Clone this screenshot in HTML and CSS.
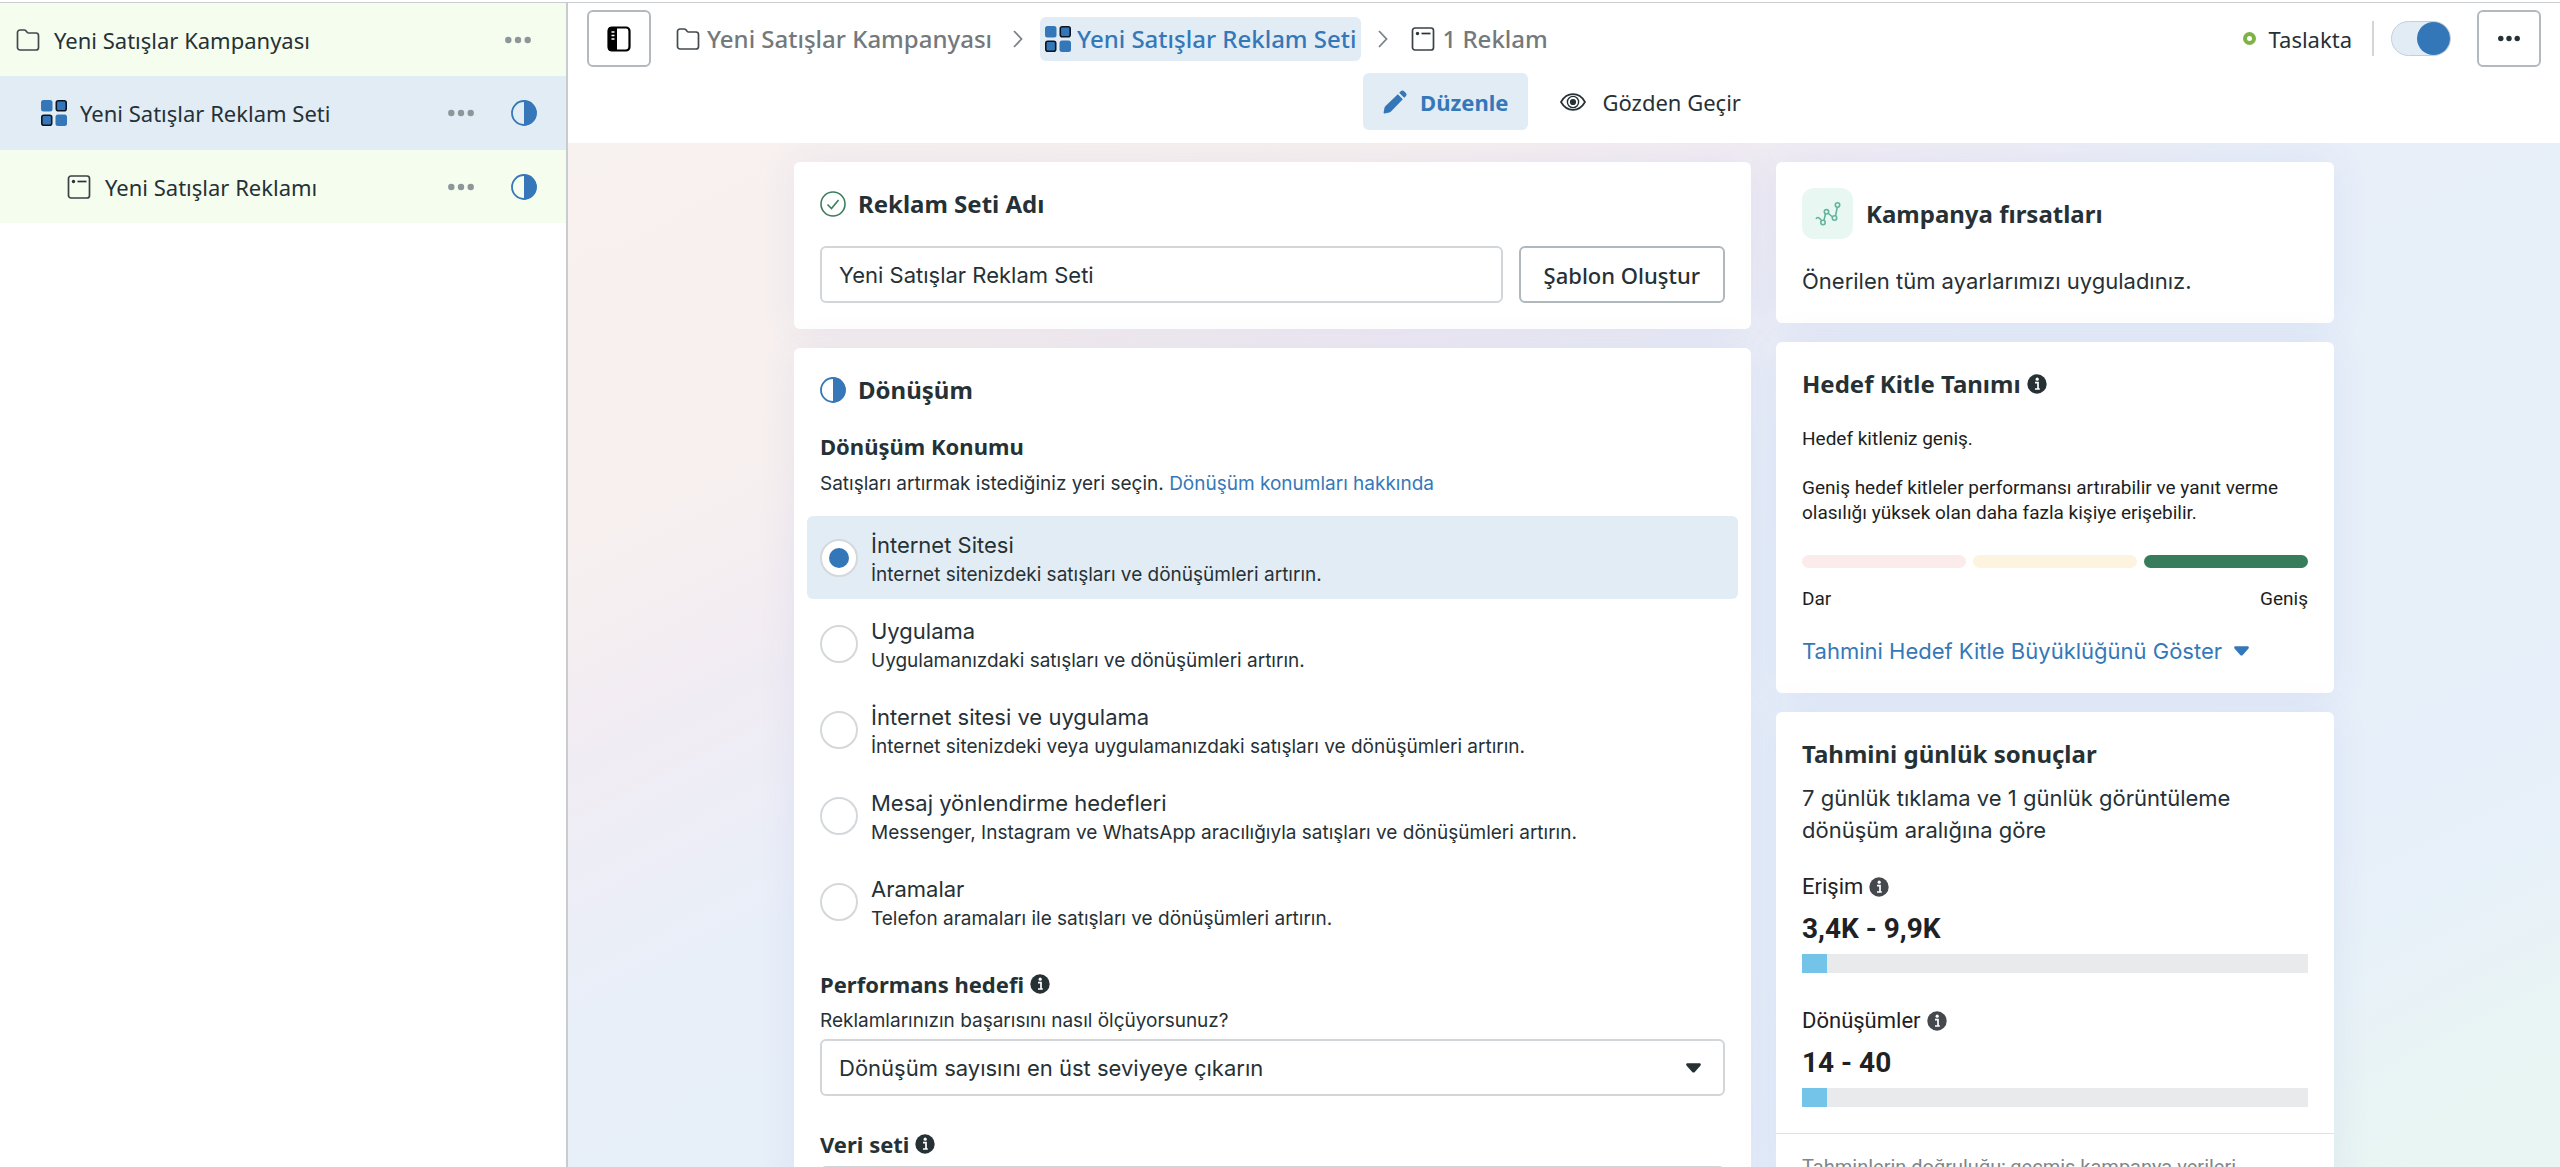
FILE: index.html
```html
<!DOCTYPE html>
<html lang="tr">
<head>
<meta charset="utf-8">
<title>Yeni Satışlar Reklam Seti</title>
<link rel="stylesheet" href="styles.css">
</head>
<body>
<svg class="sprite" aria-hidden="true">
  <symbol id="folder" viewBox="0 0 24 24"><path d="M1.5 19V4.5a2.5 2.5 0 0 1 2.500-2.500h4.200c.7 0 1.300.3 1.700.8l1.400 1.700c.3.300.6.5 1.100.5h7.600A2.500 2.500 0 0 1 22.500 7.500V19.500A2.500 2.500 0 0 1 20 22H4A2.500 2.500 0 0 1 1.500 19.500Z" fill="none" stroke="#414a4e" stroke-width="1.700"/></symbol>
  <symbol id="adset" viewBox="0 0 26 26"><g fill="#3377b8"><rect width="11.500" height="11.500" rx="2.500"/><rect x="14.500" y="14.500" width="11.500" height="11.500" rx="2.500"/></g><g fill="#3377b8" stroke="#0c1420" stroke-width="1.600"><rect x="15.300" y=".8" width="9.900" height="9.900" rx="2"/><rect x=".8" y="15.300" width="9.900" height="9.900" rx="2"/></g></symbol>
  <symbol id="ad" viewBox="0 0 24 24"><rect x="1.500" y="1" width="21" height="22" rx="2.500" fill="none" stroke="#3a4246" stroke-width="1.700"/><circle cx="6.500" cy="6.500" r="1.700" fill="#2b3337"/><path d="M10.500 6.500h9" stroke="#2b3337" stroke-width="1.700"/></symbol>
  <symbol id="dots" viewBox="0 0 26 8"><g fill="currentColor"><circle cx="3.300" cy="4" r="3.200"/><circle cx="13" cy="4" r="3.200"/><circle cx="22.700" cy="4" r="3.200"/></g></symbol>
  <symbol id="half" viewBox="0 0 26 26"><circle cx="13" cy="13" r="12" fill="none" stroke="#3577b8" stroke-width="1.800"/><path d="M13 .5a12.500 12.500 0 0 1 0 25Z" fill="#3577b8"/></symbol>
  <symbol id="chevron" viewBox="0 0 10 18"><path d="M1 1l7.500 8L1 17" fill="none" stroke="#7b8386" stroke-width="1.800"/></symbol>
  <symbol id="info" viewBox="0 0 20 20"><circle cx="10" cy="10" r="9.700" fill="currentColor"/><circle cx="10.200" cy="5.200" r="1.600" fill="#fff"/><path d="M8 8.700h3V15M8 15h4.800" fill="none" stroke="#fff" stroke-width="1.700"/></symbol>
  <symbol id="caret" viewBox="0 0 16 10"><path d="M2 0h12c1.800 0 2.400 1.300 1.300 2.500L9.400 9.200c-.8.900-2 .9-2.800 0L.7 2.500C-.4 1.300.2 0 2 0Z" fill="currentColor"/></symbol>
</svg>
<div class="app">
  <aside class="sidebar">
    <nav aria-label="Kampanya yapısı">
      <div class="node node-campaign">
        <svg class="icon"><use href="#folder"/></svg><a href="#">Yeni Satışlar Kampanyası</a>
        <button class="dots" aria-label="Diğer"><svg><use href="#dots"/></svg></button>
      </div>
      <div class="node node-adset">
        <svg class="icon"><use href="#adset"/></svg><a href="#">Yeni Satışlar Reklam Seti</a>
        <button class="dots" aria-label="Diğer"><svg><use href="#dots"/></svg></button>
        <svg class="state"><use href="#half"/></svg>
      </div>
      <div class="node node-ad">
        <svg class="icon"><use href="#ad"/></svg><a href="#">Yeni Satışlar Reklamı</a>
        <button class="dots" aria-label="Diğer"><svg><use href="#dots"/></svg></button>
        <svg class="state"><use href="#half"/></svg>
      </div>
    </nav>
  </aside>
  <div class="workspace">
    <header class="header">
      <div class="toolbar">
        <button class="square" aria-label="Kenar çubuğu">
          <svg class="panel" viewBox="0 0 24 26"><rect x="1.500" y="1.500" width="21" height="23" rx="3.500" fill="none" stroke="#000" stroke-width="2.200"/><path d="M4 1h6v24H4a3 3 0 0 1-3-3V4a3 3 0 0 1 3-3Z"/><path d="M4.500 6h3M4.500 9.500h3M4.500 13h3" stroke="#fff" stroke-width="1.500"/></svg>
        </button>
        <nav class="crumbs" aria-label="Konum">
          <a href="#" class="crumb"><svg class="icon"><use href="#folder"/></svg>Yeni Satışlar Kampanyası</a>
          <svg class="chevron"><use href="#chevron"/></svg>
          <a href="#" class="crumb crumb-current"><svg class="icon"><use href="#adset"/></svg>Yeni Satışlar Reklam Seti</a>
          <svg class="chevron"><use href="#chevron"/></svg>
          <a href="#" class="crumb"><svg class="icon"><use href="#ad"/></svg>1 Reklam</a>
        </nav>
        <div class="status"><span class="ring"></span>Taslakta</div>
        <input type="checkbox" class="switch" aria-label="Yayında" checked>
        <button class="square" aria-label="Diğer seçenekler"><svg class="more"><use href="#dots"/></svg></button>
      </div>
      <div class="tabs">
        <button class="tab tab-active"><svg class="icon" viewBox="0 0 24 24" fill="#3377b8"><path d="M14.800 4.200l5 5L8 21.500c-.5.500-1 .8-1.700 1L1.500 23.500c-.6.100-1-.3-.9-.9l.9-4.900c.1-.6.400-1.100.8-1.500ZM16.200 2.800l1.300-1.400a2.700 2.700 0 0 1 3.800 0l1.300 1.300a2.700 2.700 0 0 1 0 3.800l-1.400 1.300Z"/></svg>Düzenle</button>
        <button class="tab"><svg class="eye" viewBox="0 0 26 18"><path d="M1 9C3.800 4 8 1.200 13 1.200S22.200 4 25 9c-2.800 5-7 7.800-12 7.800S3.800 14 1 9Z" fill="none" stroke="#263136" stroke-width="1.700"/><circle cx="13" cy="9" r="5.600" fill="none" stroke="#263136" stroke-width="1.400"/><circle cx="13" cy="9" r="3.100" fill="#263136"/></svg>Gözden Geçir</button>
      </div>
    </header>
    <main class="canvas">
      <div class="columns">
        <div class="column">
          <section class="card">
            <h2 class="card-title title-icon"><svg viewBox="0 0 26 26" fill="none" stroke="#3a7d5c" stroke-width="1.600"><circle cx="13" cy="13" r="12"/><path d="M7.500 13.500l4 4 7-8.500"/></svg>Reklam Seti Adı</h2>
            <div class="name-row">
              <input type="text" class="field" aria-label="Reklam Seti Adı" value="Yeni Satışlar Reklam Seti">
              <button class="template">Şablon Oluştur</button>
            </div>
          </section>
          <section class="card">
            <h2 class="card-title title-icon"><svg><use href="#half"/></svg>Dönüşüm</h2>
            <h3 class="group-title location-title">Dönüşüm Konumu</h3>
            <p class="hint location-hint">Satışları artırmak istediğiniz yeri seçin. <a href="#">Dönüşüm konumları hakkında</a></p>
            <div class="options">
              <label class="option option-on"><input type="radio" name="konum" checked><span><b>İnternet Sitesi</b><small>İnternet sitenizdeki satışları ve dönüşümleri artırın.</small></span></label>
              <label class="option"><input type="radio" name="konum"><span><b>Uygulama</b><small>Uygulamanızdaki satışları ve dönüşümleri artırın.</small></span></label>
              <label class="option"><input type="radio" name="konum"><span><b>İnternet sitesi ve uygulama</b><small>İnternet sitenizdeki veya uygulamanızdaki satışları ve dönüşümleri artırın.</small></span></label>
              <label class="option"><input type="radio" name="konum"><span><b>Mesaj yönlendirme hedefleri</b><small>Messenger, Instagram ve WhatsApp aracılığıyla satışları ve dönüşümleri artırın.</small></span></label>
              <label class="option"><input type="radio" name="konum"><span><b>Aramalar</b><small>Telefon aramaları ile satışları ve dönüşümleri artırın.</small></span></label>
            </div>
            <h3 class="group-title goal-title">Performans hedefi<svg class="info"><use href="#info"/></svg></h3>
            <label class="hint goal-hint" for="goal">Reklamlarınızın başarısını nasıl ölçüyorsunuz?</label>
            <div class="picker">
              <select id="goal" class="field"><option>Dönüşüm sayısını en üst seviyeye çıkarın</option></select>
              <svg class="caret"><use href="#caret"/></svg>
            </div>
            <h3 class="group-title data-title" id="data">Veri seti<svg class="info"><use href="#info"/></svg></h3>
            <div class="picker">
              <select class="field" aria-labelledby="data"><option></option></select>
              <svg class="caret"><use href="#caret"/></svg>
            </div>
          </section>
        </div>
        <div class="column">
          <section class="card">
            <h2 class="card-title chance-title"><span class="tile"><svg viewBox="0 0 26 26" fill="none" stroke="#62b59b" stroke-width="1.600"><path d="M1 18c1.500-3 3.500-1 5.500 1.500M9 19.500l1.500-7M13.500 12.500l4 3.500M20.500 15l1.800-9"/><circle cx="8" cy="21.500" r="2.200"/><circle cx="11.500" cy="10.800" r="2.200"/><circle cx="19.500" cy="17" r="2.200"/><circle cx="22.500" cy="4" r="2.200"/></svg></span>Kampanya fırsatları</h2>
            <p class="chance-text">Önerilen tüm ayarlarımızı uyguladınız.</p>
          </section>
          <section class="card">
            <h2 class="card-title">Hedef Kitle Tanımı<svg class="info"><use href="#info"/></svg></h2>
            <p class="note">Hedef kitleniz geniş.</p>
            <p class="note">Geniş hedef kitleler performansı artırabilir ve yanıt verme olasılığı yüksek olan daha fazla kişiye erişebilir.</p>
            <div class="scale"><span class="narrow"></span><span class="medium"></span><span class="broad"></span></div>
            <div class="scale-ends"><span>Dar</span><span>Geniş</span></div>
            <a href="#" class="reveal">Tahmini Hedef Kitle Büyüklüğünü Göster<svg class="caret"><use href="#caret"/></svg></a>
          </section>
          <section class="card">
            <h2 class="card-title">Tahmini günlük sonuçlar</h2>
            <p class="basis">7 günlük tıklama ve 1 günlük görüntüleme dönüşüm aralığına göre</p>
            <div class="metric">
              <h3>Erişim<svg class="info"><use href="#info"/></svg></h3>
              <p>3,4K - 9,9K</p>
              <div class="meter"><span style="width:5%"></span></div>
            </div>
            <div class="metric">
              <h3>Dönüşümler<svg class="info"><use href="#info"/></svg></h3>
              <p>14 - 40</p>
              <div class="meter"><span style="width:5%"></span></div>
            </div>
            <p class="footnote">Tahminlerin doğruluğu; geçmiş kampanya verileri</p>
          </section>
        </div>
      </div>
    </main>
  </div>
</div>
</body>
</html>
```
FILE: styles.css
```css
* { box-sizing: border-box; }

body {
  margin: 0;
  background: #fff;
  color: #263136;
  font: 22px/32px Inter, "Noto Sans", sans-serif;
}

h2, h3, p { margin: 0; }
a { color: #3578b9; text-decoration: none; }
button, input, select { font: inherit; color: inherit; margin: 0; }
button { padding: 0; border: 0; background: none; }
svg { flex: none; display: block; }
.sprite { position: absolute; width: 0; height: 0; }

.app {
  display: flex;
  height: calc(100vh - 2px);
  margin-top: 2px;
  border-top: 1px solid #c9cdd0;
}

/* Campaign tree */
.sidebar {
  flex: none;
  width: 568px;
  border-right: 2px solid #c9ccce;
}
.node {
  display: flex;
  align-items: center;
  height: 73px;
  padding: 0 29px 0 16px;
  background: #f4fdee;
  font-family: "Noto Sans", sans-serif;
}
.node a { flex: 1; padding-left: 14px; color: #263136; }
.node-campaign { padding-right: 35px; }
.node-adset { height: 74px; padding-left: 41px; background: #e2ecf4; }
.node-adset a { padding-left: 13px; }
.node-ad { padding-left: 67px; }
.dots { color: #8d9699; }
.dots svg { width: 26px; height: 8px; }
.state { width: 26px; height: 26px; margin-left: 37px; }
.icon { width: 24px; height: 24px; }
.node-adset .icon, .crumb-current .icon { width: 26px; height: 26px; }

/* Header */
.workspace {
  flex: 1;
  min-width: 0;
  display: flex;
  flex-direction: column;
}
.header {
  flex: none;
  padding: 7px 19px 13px;
  font-family: "Noto Sans", sans-serif;
}
.toolbar { display: flex; align-items: center; }
.square {
  display: grid;
  place-items: center;
  width: 64px;
  height: 57px;
  border: 2px solid #b3b9be;
  border-radius: 6px;
}
.panel { width: 24px; height: 26px; }
.more { width: 22px; height: 7px; }
.crumbs {
  flex: 1;
  display: flex;
  align-items: center;
  gap: 17px;
  padding-left: 19px;
}
.crumb {
  display: flex;
  align-items: center;
  gap: 7px;
  height: 44px;
  padding: 0 4px 0 6px;
  border-radius: 6px;
  color: #73797c;
  font-size: 24px;
  font-weight: 500;
}
.crumb-current { gap: 6px; padding: 0 5px; background: #e2ecf4; color: #3578b9; }
.chevron { width: 10px; height: 18px; }
.status {
  display: flex;
  align-items: center;
  gap: 13px;
  height: 35px;
  padding-right: 20px;
  border-right: 2px solid #d3d6d9;
}
.ring {
  width: 13px;
  height: 13px;
  border: 4px solid #7cb342;
  border-radius: 50%;
}
.switch {
  appearance: none;
  display: flex;
  justify-content: flex-end;
  width: 60px;
  height: 35px;
  margin: 0 26px 0 17px;
  border: 1px solid #c5ced8;
  border-radius: 18px;
  background: #e2ecf4;
}
.switch::before {
  content: "";
  width: 33px;
  height: 33px;
  border-radius: 50%;
  background: #3377b8;
}
.tabs {
  display: flex;
  justify-content: center;
  gap: 12px;
  margin-top: 6px;
  padding-right: 4px;
}
.tab {
  display: flex;
  align-items: center;
  gap: 16px;
  height: 57px;
  padding: 0 20px;
  border-radius: 6px;
}
.tab-active { gap: 13px; background: #e2ecf4; color: #3578b9; font-weight: 700; }
.eye { width: 26px; height: 18px; }

/* Editing area */
.canvas {
  flex: 1;
  min-height: 0;
  overflow: auto;
  scrollbar-width: none;
  padding: 19px 20px;
  background: linear-gradient(to bottom right, #f7f1ef, #f7f0ef 20%, #f1ecf3 30%, #e8eff9 44%, #e7effa 78%, #e8f2f7 87%, #e9f5f2 96%);
}
.columns {
  display: grid;
  grid-template-columns: minmax(0, 957fr) minmax(0, 558fr);
  align-items: start;
  gap: 25px;
  max-width: 1540px;
  margin: 0 auto;
}
.column { display: grid; gap: 19px; }
.card {
  padding: 26px;
  border-radius: 6px;
  background: #fff;
  box-shadow: 0 0 40px rgba(60, 70, 190, .07);
}
.card-title {
  display: flex;
  align-items: center;
  padding-bottom: 2px;
  font: 700 24px/32px "Noto Sans", sans-serif;
}
.title-icon { gap: 12px; }
.title-icon svg { width: 26px; height: 26px; }
.info { width: 20px; height: 20px; margin-left: 6px; }

.field {
  width: 100%;
  height: 57px;
  padding: 0 17px;
  border: 2px solid #d2d6d9;
  border-radius: 6px;
  background: #fff;
  appearance: none;
}
.name-row { display: flex; gap: 16px; margin-top: 24px; }
.template {
  flex: none;
  padding: 0 23px;
  border: 2px solid #b0b8bc;
  border-radius: 6px;
  font-family: "Noto Sans", sans-serif;
  font-weight: 500;
}

.group-title {
  display: flex;
  align-items: center;
  font: 700 22px/30px "Noto Sans", sans-serif;
}
.hint { display: block; font-size: 19px; line-height: 26px; }
.location-title { margin-top: 23px; }
.location-hint { margin-top: 10px; }
.goal-title { margin-top: 26px; }
.goal-hint { margin: 9px 0 5px; }
.data-title { margin: 33px 0 7px; }

.options { display: grid; gap: 3px; margin: 19px -13px 0; }
.option {
  display: flex;
  align-items: center;
  gap: 13px;
  height: 83px;
  padding: 0 13px;
  border-radius: 6px;
}
.option span { padding-top: 4px; }
.option-on { background: #e2ecf4; }
.option b, .option small { display: block; font-weight: 400; line-height: 29px; }
.option small { font-size: 19px; }
.option input {
  appearance: none;
  display: grid;
  place-items: center;
  width: 38px;
  height: 38px;
  border: 2px solid #d5d8db;
  border-radius: 50%;
  background: #fff;
}
.option input:checked::before {
  content: "";
  width: 20px;
  height: 20px;
  border-radius: 50%;
  background: #3377b8;
}

.picker { display: grid; align-items: center; }
.picker > * { grid-area: 1 / 1; }
.picker .caret { justify-self: end; margin-right: 24px; pointer-events: none; }
.caret { width: 15px; height: 10px; }

/* Side cards */
.chance-title { gap: 13px; }
.tile {
  display: grid;
  place-items: center;
  width: 51px;
  height: 51px;
  border-radius: 12px;
  background: #e9f7f3;
}
.tile svg { width: 26px; height: 26px; }
.chance-text { margin-top: 24px; }

.note {
  margin-top: 24px;
  color: #1c1e21;
  font: 19px/25px Roboto, sans-serif;
}
.scale {
  display: grid;
  grid-template-columns: repeat(3, 1fr);
  gap: 7px;
  margin: 30px 0 18px;
}
.scale span { height: 13px; border-radius: 7px; }
.narrow { background: #fcebeb; }
.medium { background: #fdf4df; }
.broad { background: #377d5b; }
.scale-ends {
  display: flex;
  justify-content: space-between;
  color: #1c1e21;
  font: 19px/25px Roboto, sans-serif;
}
.reveal { display: flex; align-items: center; gap: 12px; margin-top: 24px; }

.basis { margin-top: 10px; }
.metric { margin-top: 25px; color: #1f2124; font-family: Roboto, sans-serif; }
.metric + .metric { margin-top: 32px; }
.metric h3 { display: flex; align-items: center; font: inherit; }
.metric .info { color: #45484d; }
.metric p { margin: 8px 0 7px; font-size: 28px; font-weight: 700; line-height: 36px; }
.meter { height: 19px; background: #e9eaec; }
.meter span { display: block; height: 100%; background: #74c3e8; }
.footnote {
  margin: 26px -26px 0;
  padding: 20px 26px 0;
  border-top: 1px solid #dfe1e4;
  color: #80868a;
  font: 20px/26px Roboto, sans-serif;
}
```
